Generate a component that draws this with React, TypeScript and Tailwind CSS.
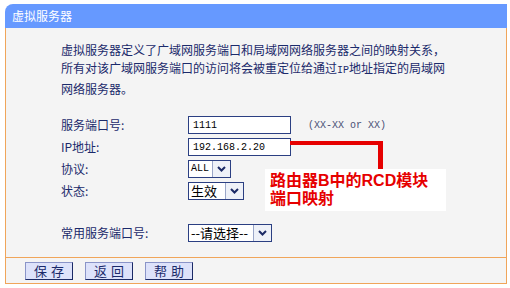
const cjk = "font-['Noto_Sans_CJK_SC',sans-serif]";
const mono = "font-['Liberation_Mono','Noto_Sans_CJK_SC',monospace]";

function Arrow() {
  return (
    <span className="flex h-full w-[18px] items-center justify-center border-l border-[#9aa6c8] bg-[#eef1f8]">
      <svg width="9" height="6" viewBox="0 0 9 6" aria-hidden>
        <path d="M1 1 L4.5 4.5 L8 1" fill="none" stroke="#1b2a66" strokeWidth="2" />
      </svg>
    </span>
  );
}

function FakeSelect({ label, width, className }: { label: string; width: string; className: string }) {
  return (
    <div className={`flex h-[18px] items-center border border-[#2b3f82] bg-white ${width}`}>
      <span className={`flex-1 pl-[2px] leading-[16px] text-black ${className}`}>{label}</span>
      <Arrow />
    </div>
  );
}

function Row({ label, children }: { label: string; children: React.ReactNode }) {
  return (
    <div className="flex h-[18px] items-center">
      <span className="w-[127px] text-[12px] text-[#1b2a6b]">{label}</span>
      {children}
    </div>
  );
}

function Button({ text }: { text: string }) {
  return (
    <button className="flex h-[18px] w-[48px] items-center justify-center border border-t-[#8a94c8] border-l-[#8a94c8] border-r-[#1b2a66] border-b-[#1b2a66] bg-[#dde2fa] text-[13px] tracking-[4px] text-[#1b2a6b] indent-[4px]">
      {text}
    </button>
  );
}

export default function App() {
  return (
    <div className={`h-[288px] w-[510px] bg-white pl-[5px] pt-[4px] ${cjk}`}>
      <div className="relative w-[502px]">
        <div className="flex h-[24px] items-center rounded-tl-[8px] bg-[#6699ff] pl-[7px] text-[12px] text-white">
          虚拟服务器
        </div>
        <div className="border-x border-b border-[#f0a55a] bg-[#f4f4f4]">
          <div className="border-b border-[#f0a55a] pb-[15px] pl-[55px] pt-[13px]">
            <p className="w-[400px] text-[12px] leading-[18px] text-[#1b2a6b]">
              虚拟服务器定义了广域网服务端口和局域网网络服务器之间的映射关系，
              <br />
              所有对该广域网服务端口的访问将会被重定位给通过<span className={`${mono} text-[10px]`}>IP</span>地址指定的局域网
              <br />
              网络服务器。
            </p>
            <div className="mt-[18px] flex flex-col gap-[4px]">
              <Row label="服务端口号:">
                <input
                  readOnly
                  value="1111"
                  className={`h-[18px] w-[103px] border border-[#2b3f82] bg-white px-[4px] text-[10px] text-black outline-none ${mono}`}
                />
                <span className={`ml-[17px] text-[10px] text-[#4a5075] ${mono}`}>(XX-XX or XX)</span>
              </Row>
              <Row label="IP地址:">
                <input
                  readOnly
                  value="192.168.2.20"
                  className={`h-[18px] w-[103px] border border-[#2b3f82] bg-white px-[4px] text-[10px] text-black outline-none ${mono}`}
                />
              </Row>
              <Row label="协议:">
                <FakeSelect label="ALL" width="w-[43px]" className={`text-[10px] ${mono}`} />
              </Row>
              <Row label="状态:">
                <FakeSelect label="生效" width="w-[56px]" className="text-[13px]" />
              </Row>
            </div>
            <div className="mt-[24px]">
              <Row label="常用服务端口号:">
                <FakeSelect label="--请选择--" width="w-[84px]" className="text-[13px]" />
              </Row>
            </div>
          </div>
          <div className="flex gap-[12px] pb-[3px] pl-[19px] pt-[4px]">
            <Button text="保存" />
            <Button text="返回" />
            <Button text="帮助" />
          </div>
        </div>

        {/* red annotation drawn over the form */}
        <div className="absolute left-[285px] top-[137px] h-[4px] w-[93px] bg-[#e60000]" />
        <div className="absolute left-[373px] top-[137px] h-[31px] w-[5px] bg-[#e60000]" />
        <div className="absolute left-[260px] top-[165px] h-[42px] w-[181px] bg-white pl-[5px] pt-[3px] font-['Liberation_Sans','Noto_Sans_CJK_SC',sans-serif] text-[16px] font-bold leading-[18px] text-[#e60000]">
          路由器B中的RCD模块
          <br />
          端口映射
        </div>
      </div>
    </div>
  );
}
